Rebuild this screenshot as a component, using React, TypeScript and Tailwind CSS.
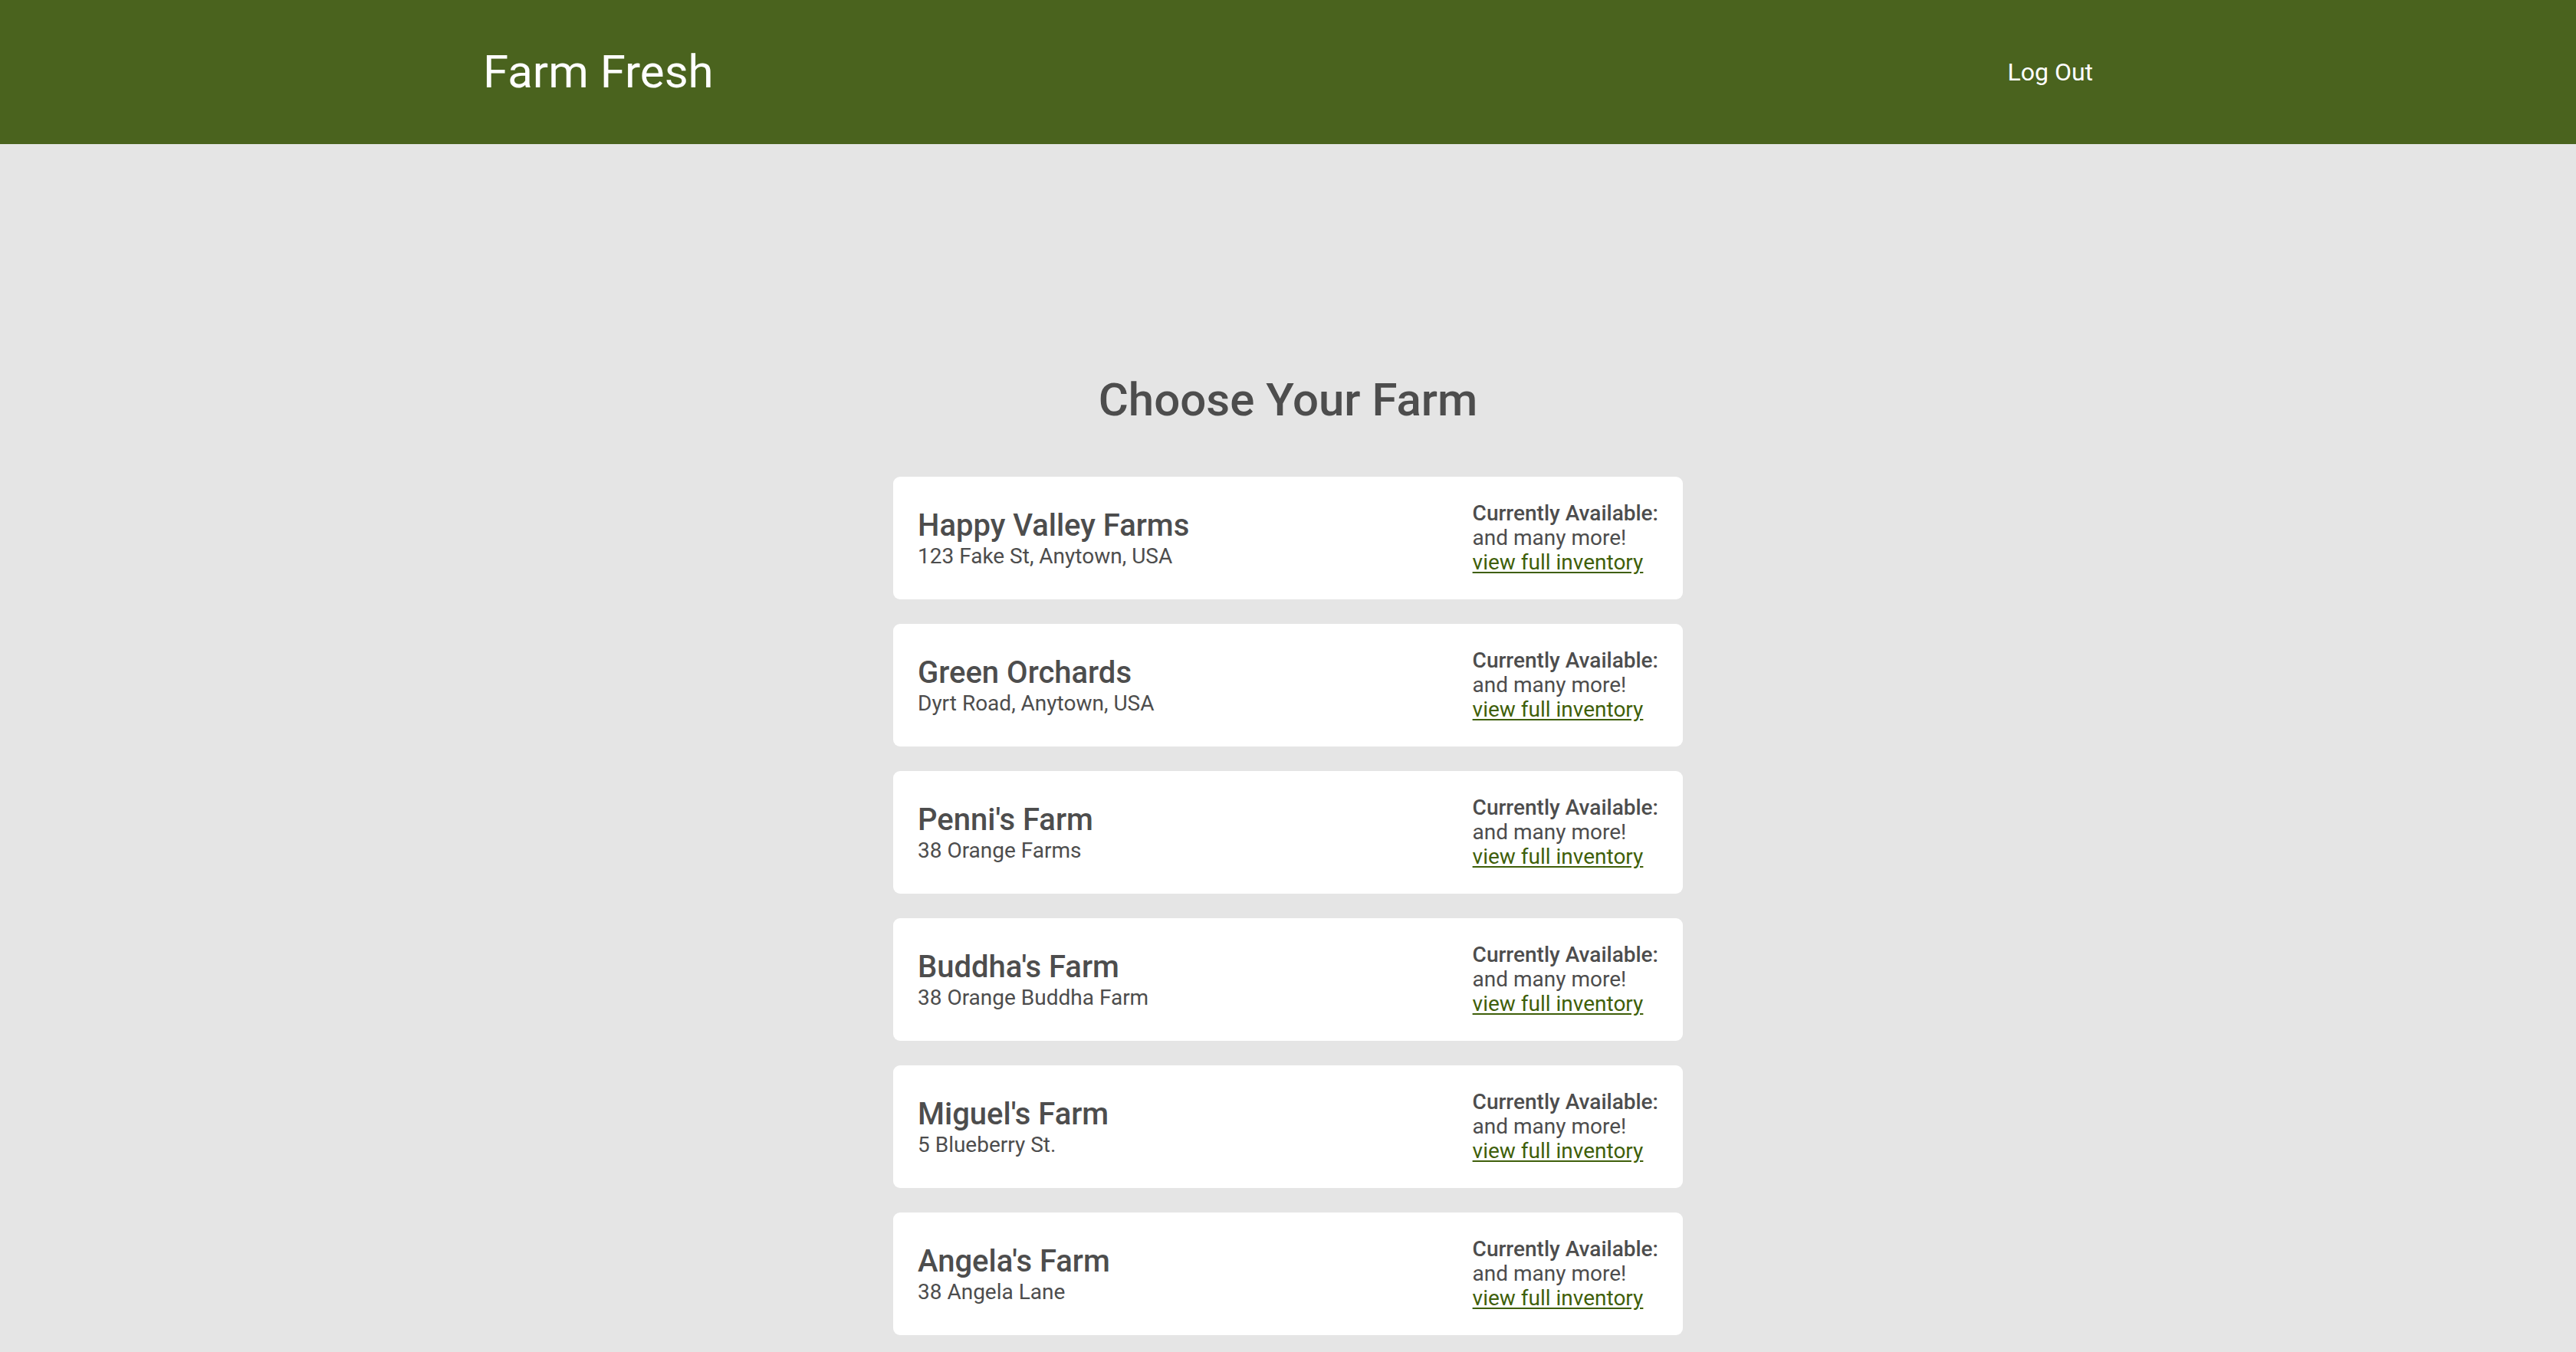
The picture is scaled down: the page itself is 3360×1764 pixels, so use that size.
import React from 'react';

const farms = [
    { name: 'Happy Valley Farms', address: '123 Fake St, Anytown, USA' },
    { name: 'Green Orchards', address: 'Dyrt Road, Anytown, USA' },
    { name: "Penni's Farm", address: '38 Orange Farms' },
    { name: "Buddha's Farm", address: '38 Orange Buddha Farm' },
    { name: "Miguel's Farm", address: '5 Blueberry St.' },
    { name: "Angela's Farm", address: '38 Angela Lane' },
];

export default function App() {
    return (
        <div className="min-h-screen bg-[#e5e5e5] text-[#4d4d4d]" style={{ fontFamily: 'Roboto, "Liberation Sans", sans-serif' }}>
            {/* barra superior */}
            <header className="h-[188px] bg-[#4a631e]">
                <div className="mx-auto flex h-full w-[2100px] items-center justify-between">
                    <h1 className="text-[60px] leading-none text-white">Farm Fresh</h1>
                    <button className="text-[32px] leading-none text-white">Log Out</button>
                </div>
            </header>

            <main className="flex flex-col items-center pt-[298px] pb-[24px]">
                <h2 className="text-[60px] leading-[72px] font-medium">Choose Your Farm</h2>

                <ul className="mt-[64px] flex w-[1030px] flex-col gap-[32px]">
                    {farms.map((farm) => (
                        <li key={farm.name} className="flex h-[160px] items-center justify-between rounded-[9px] bg-white px-[32px]">
                            <div>
                                <p className="text-[40px] leading-[48px] font-medium">{farm.name}</p>
                                <p className="text-[28px] leading-[32px]">{farm.address}</p>
                            </div>
                            <div className="text-[28px] leading-[32px]">
                                <p className="font-medium">Currently Available:</p>
                                <p>and many more!</p>
                                <a href="#" className="text-[#3f5f0a] underline underline-offset-[3px]">view full inventory</a>
                            </div>
                        </li>
                    ))}
                </ul>
            </main>
        </div>
    );
}
